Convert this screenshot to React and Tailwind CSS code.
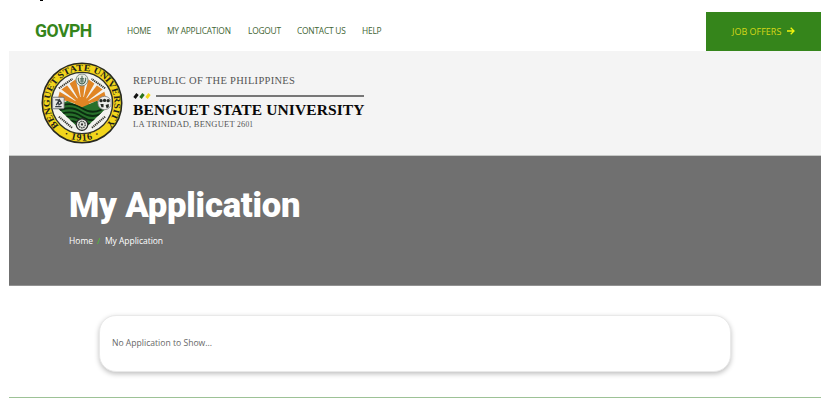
const NAV = [
  { label: 'HOME', box: 'w-[40px]' },
  { label: 'MY APPLICATION', box: 'w-[81px]' },
  { label: 'LOGOUT', box: 'w-[49px]' },
  { label: 'CONTACT US', box: 'w-[65px]' },
  { label: 'HELP', box: 'w-[30px]' },
];

const RAYS = [-90, -67, -45, -22, 0, 22, 45, 67, 90];

function Emblem({ x, y, children }) {
  return (
    <g transform={`translate(${x} ${y})`}>
      {children}
    </g>
  );
}

function Seal() {
  return (
    <svg viewBox="-41 -41 82 82" className="h-[82px] w-[82px] shrink-0">
      <defs>
        <path id="ring" d="M-22.5 23.4A32.4 32.4 0 1 1 22.5 23.4" />
        <path id="base" d="M-25 28.2A37.7 37.7 0 0 0 25 28.2" />
        <clipPath id="fan"><path d="M-25 4L-21 -12L0 -27L21 -12L25 4Z" /></clipPath>
        <clipPath id="land"><path d="M-25 3L-14 -2L0 4L14 -2L25 3L0 27Z" /></clipPath>
      </defs>
      <circle r="39.7" fill="#f2d51c" stroke="#28291f" strokeWidth="1.6" />
      <circle r="30.6" fill="#f3f3ef" stroke="#303329" strokeWidth="1.4" />
      <g transform="scale(1.05)">
        <g clipPath="url(#fan)">
          {RAYS.map((a) => (
            <path key={a} d="M0 4L-4.6 -32L4.6 -32Z" fill="#e08524" transform={`rotate(${a} 0 2)`} />
          ))}
          <circle r="7" cy="1" fill="#e08524" />
        </g>
        <g clipPath="url(#land)">
          <rect x="-25" y="-8" width="50" height="38" fill="#27702a" />
          <path
            d="M-25 5Q-12 -3 0 5T25 2M-25 9Q-12 1 0 9T25 6M-25 13Q-12 5 0 13T25 10M-25 17Q-12 9 0 17T25 14M-25 21Q-12 13 0 21T25 18"
            fill="none" stroke="#0a2b10" strokeWidth="1.7"
          />
        </g>
        <g fill="none" stroke="#34352d" strokeWidth="1.9" strokeDasharray="1.2 0.7">
          <path d="M-22 -14L-9 -23M22 -14L9 -23M-22 13L-9 24M22 13L9 24" />
        </g>
        <Emblem x={0} y={-22}>
          <circle r="5.7" fill="#e8ebe3" stroke="#67776b" strokeWidth="0.8" />
          <path d="M-3.5 -2Q-4 3 0 4Q4 3 3.5 -2M0 -4V3M-2 -1H2M-2 1H2" fill="none" stroke="#426351" strokeWidth="1" />
        </Emblem>
        <Emblem x={-22.5} y={0}>
          <rect x="-5.5" y="-5.5" width="11" height="11" rx="1" fill="#e7e8e6" stroke="#65686a" strokeWidth="0.8" />
          <path d="M-3 3.5H3M-2 2L1 -3L3 0L0 2M-3 -3H0V1" fill="none" stroke="#383d42" strokeWidth="1.3" />
        </Emblem>
        <Emblem x={21.5} y={0}>
          <circle r="6.4" fill="#ededea" stroke="#777" strokeWidth="0.7" />
          <g fill="#252923">
            <circle cx="-3.4" cy="-2.2" r="1.6" /><circle cx="0" cy="-2.5" r="1.6" /><circle cx="3.4" cy="-2.2" r="1.6" />
            <path d="M-4 1H-1V4H-3ZM1 2L4 1V4L2 5Z" />
          </g>
        </Emblem>
        <Emblem x={0} y={20.5}>
          <circle r="5.5" fill="#e5e7e2" stroke="#2b2d2b" strokeWidth="1.2" />
          <circle r="3.1" fill="none" stroke="#3d423e" strokeWidth="1.3" strokeDasharray="1.4 0.7" />
          <circle r="1.1" fill="#333" />
        </Emblem>
      </g>
      <g className="font-['Liberation_Serif',serif] font-bold" fill="#20211a">
        <text fontSize="9" textLength="150" lengthAdjust="spacingAndGlyphs">
          <textPath href="#ring" startOffset="1">BENGUET STATE UNIVERSITY</textPath>
        </text>
        <text fontSize="10" letterSpacing="0.8" textAnchor="middle">
          <textPath href="#base" startOffset="50%">· 1916 ·</textPath>
        </text>
      </g>
    </svg>
  );
}

export default function App() {
  return (
    <div className="h-[408px] w-[827px] overflow-hidden bg-white font-['Open_Sans','Noto_Sans',sans-serif]">
      <div className="h-[12px] pl-[40px]">
        <div className="h-px w-[3px] bg-black" />
      </div>
      <main className="ml-[9px] w-[812px]">
        <header className="flex h-[39px] items-center">
          <div className="w-[118px] pl-[26px] font-['Roboto',sans-serif] text-[17.6px] font-bold leading-none tracking-[-0.5px] text-[#35851b]">GOVPH</div>
          <nav className="flex text-[8.4px] leading-none tracking-[-0.22px] text-[#3f6534]">
            {NAV.map((n) => (
              <a key={n.label} className={`${n.box} whitespace-nowrap`}>{n.label}</a>
            ))}
          </nav>
          <a className="ml-auto flex h-full w-[115px] items-center bg-[#35851b] pb-px pl-[26px] text-[9px] leading-none text-[#d5d719]">
            <span className="w-[55px] whitespace-nowrap">JOB OFFERS</span>
            <svg viewBox="0 0 8 8" className="h-[8px] w-[8px]" fill="none" stroke="#f3f30c" strokeWidth="1.3">
              <path d="M0 4H7M3.7 0.8L7 4L3.7 7.2" />
            </svg>
          </a>
        </header>

        <section className="flex h-[105px] border-b border-[#c6c8c6] bg-[#f4f4f4] pl-[32px] pt-[11px]">
          <Seal />
          <div className="ml-[10px] w-[233px] pt-[13px] font-['Liberation_Serif',serif] leading-none text-[#555]">
            <div className="whitespace-nowrap text-[10.5px] leading-[12px] tracking-[0.3px]">REPUBLIC OF THE PHILIPPINES</div>
            <div className="mt-[5px] flex h-[8px] items-center">
              <svg viewBox="0 0 20 6" className="h-[6px] w-[20px]">
                <path d="M1.5 5L4.5 1" stroke="#111" strokeWidth="3" />
                <path d="M7.5 5L10.5 1" stroke="#26711c" strokeWidth="3" />
                <path d="M13.5 5L16.5 1" stroke="#f3d81c" strokeWidth="3" />
              </svg>
              <div className="ml-[3px] h-[2px] w-[208px] bg-[#777]" />
            </div>
            <div className="mt-[2px] whitespace-nowrap text-[15.5px] font-bold leading-[16px] tracking-[0.1px] text-[#080808]">BENGUET STATE UNIVERSITY</div>
            <div className="mt-px whitespace-nowrap text-[8.5px] leading-[10px] tracking-[0.2px]">
              LA TRINIDAD, BENGUET <span className="text-[7.5px]">2</span>6<span className="text-[7.5px]">01</span>
            </div>
          </div>
        </section>

        <section className="h-[130px] border-b border-[#929292] bg-[#707070] pl-[60px] pt-[29px] text-white">
          <h1 className="font-['Roboto',sans-serif] text-[34.6px] font-black leading-[40px] tracking-[-0.2px]">My Application</h1>
          <div className="mt-[10px] flex text-[8.5px] leading-[12px]">
            <span className="w-[28px]">Home</span>
            <span className="w-[8px] font-semibold text-[#4fb53c]">/</span>
            <span className="tracking-[-0.03px]">My Application</span>
          </div>
        </section>

        <section className="h-[112px] border-b border-[#9dc296] pl-[90px] pt-[29px]">
          <div className="flex h-[57px] w-[632px] items-center rounded-[17px] border border-[#e9e9e9] bg-white pl-[12px] text-[8.6px] text-[#686868] shadow-[0_2px_5px_rgba(0,0,0,0.25)]">
            No Application to Show...
          </div>
        </section>
      </main>
    </div>
  );
}
